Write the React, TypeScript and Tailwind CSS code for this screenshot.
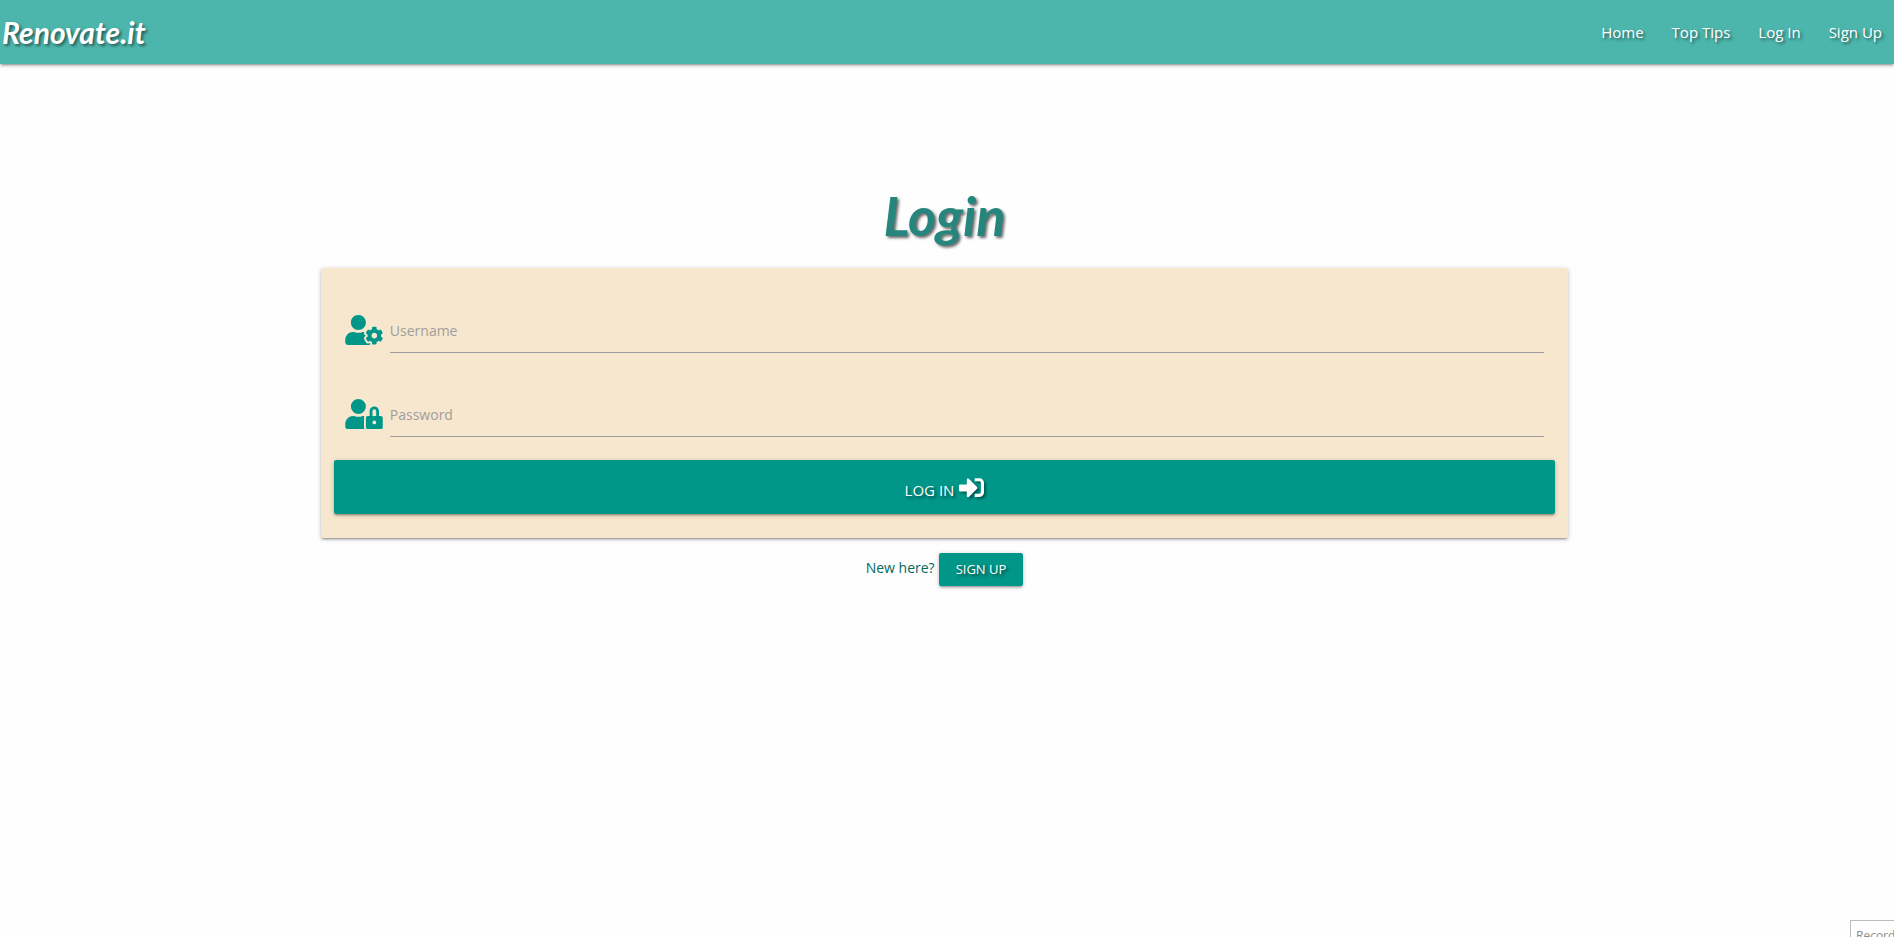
import type { ReactNode } from "react";
import { FaSignInAlt, FaUserCog, FaUserLock } from "react-icons/fa";

const links = ["Home", "Top Tips", "Log In", "Sign Up"];

const textShadow = "[text-shadow:2px_2px_3px_rgba(0,0,0,0.5)]";
const raised =
  "shadow-[0_2px_2px_0_rgba(0,0,0,0.14),0_3px_1px_-2px_rgba(0,0,0,0.12),0_1px_5px_0_rgba(0,0,0,0.2)]";

type FieldProps = { id: string; label: string; type: string; icon: ReactNode };

function Field({ id, label, type, icon }: FieldProps) {
  return (
    <div className="flex h-12 items-center gap-[7px]">
      <label htmlFor={id} aria-label={label} className="flex w-[38px] shrink-0 pt-0.5 text-[#009688]">
        {icon}
      </label>
      <input
        id={id}
        name={id}
        type={type}
        placeholder={label}
        className="h-12 min-w-0 flex-1 border-b border-[#9e9e9e] bg-transparent pt-1 text-[14px] text-gray-800 outline-none placeholder:text-[#9e9e9e]"
      />
    </div>
  );
}

export default function App() {
  return (
    <div className="relative flex min-h-screen flex-col overflow-hidden bg-[#fefefe] font-['Open_Sans',sans-serif]">
      <header
        className={`flex h-16 items-center justify-between bg-[#4db6ac] pl-0.5 text-white ${raised}`}
      >
        <a
          href="#home"
          className="font-['Lato',cursive] text-[30px] font-bold italic [text-shadow:2px_2px_3px_rgba(0,0,0,0.5)]"
        >
          Renovate.it
        </a>
        <nav className="flex gap-7 pr-3">
          {links.map((link) => (
            <a key={link} href="#" className={`text-[15px] ${textShadow}`}>
              {link}
            </a>
          ))}
        </nav>
      </header>

      <main className="grid grid-cols-12 pt-[120px] pr-[5px]">
        <div className="col-span-8 col-start-3 px-1.5">
          <h1 className="h-[84px] text-center font-['Lato',cursive] text-[54px] leading-[64px] font-bold text-[#26867d] italic [text-shadow:2px_2px_3px_rgba(0,0,0,0.6)]">
            Login
          </h1>
          <form
            onSubmit={(event) => event.preventDefault()}
            className={`rounded-xs bg-[#f7e7ce] px-[13px] pt-[37px] pb-6 ${raised}`}
          >
            <div className="flex flex-col gap-9 px-[11px]">
              <Field
                id="username"
                label="Username"
                type="text"
                icon={<FaUserCog className="h-[30px] w-[38px]" />}
              />
              <Field
                id="password"
                label="Password"
                type="password"
                icon={<FaUserLock className="h-[30px] w-[38px]" />}
              />
            </div>
            <button
              type="submit"
              className={`mt-[23px] flex h-[54px] w-full items-center justify-center gap-[5px] rounded-xs bg-[#009688] text-[15px] text-white uppercase ${textShadow} ${raised}`}
            >
              <span className="pt-1.5">Log In</span>
              <FaSignInAlt className="h-[25px] w-[25px] drop-shadow-[2px_2px_1px_rgba(0,0,0,0.4)]" />
            </button>
          </form>
          <p className="mt-[15px] flex justify-center gap-1 text-[14px] leading-[30px] text-[#00695c]">
            New here?
            <a
              href="#signup"
              className={`h-[33px] rounded-xs bg-[#009688] px-[17px] text-[13px] leading-[33px] text-white uppercase ${textShadow} ${raised}`}
            >
              Sign Up
            </a>
          </p>
        </div>
      </main>

      <div className="absolute right-0 bottom-0 h-[17px] w-11 overflow-hidden border-t border-l border-[#bdbdbd] bg-white pt-1.5 pl-[5px] text-[12px] leading-[18px] whitespace-nowrap text-[#8c8c8c]">
        Record
      </div>
    </div>
  );
}
